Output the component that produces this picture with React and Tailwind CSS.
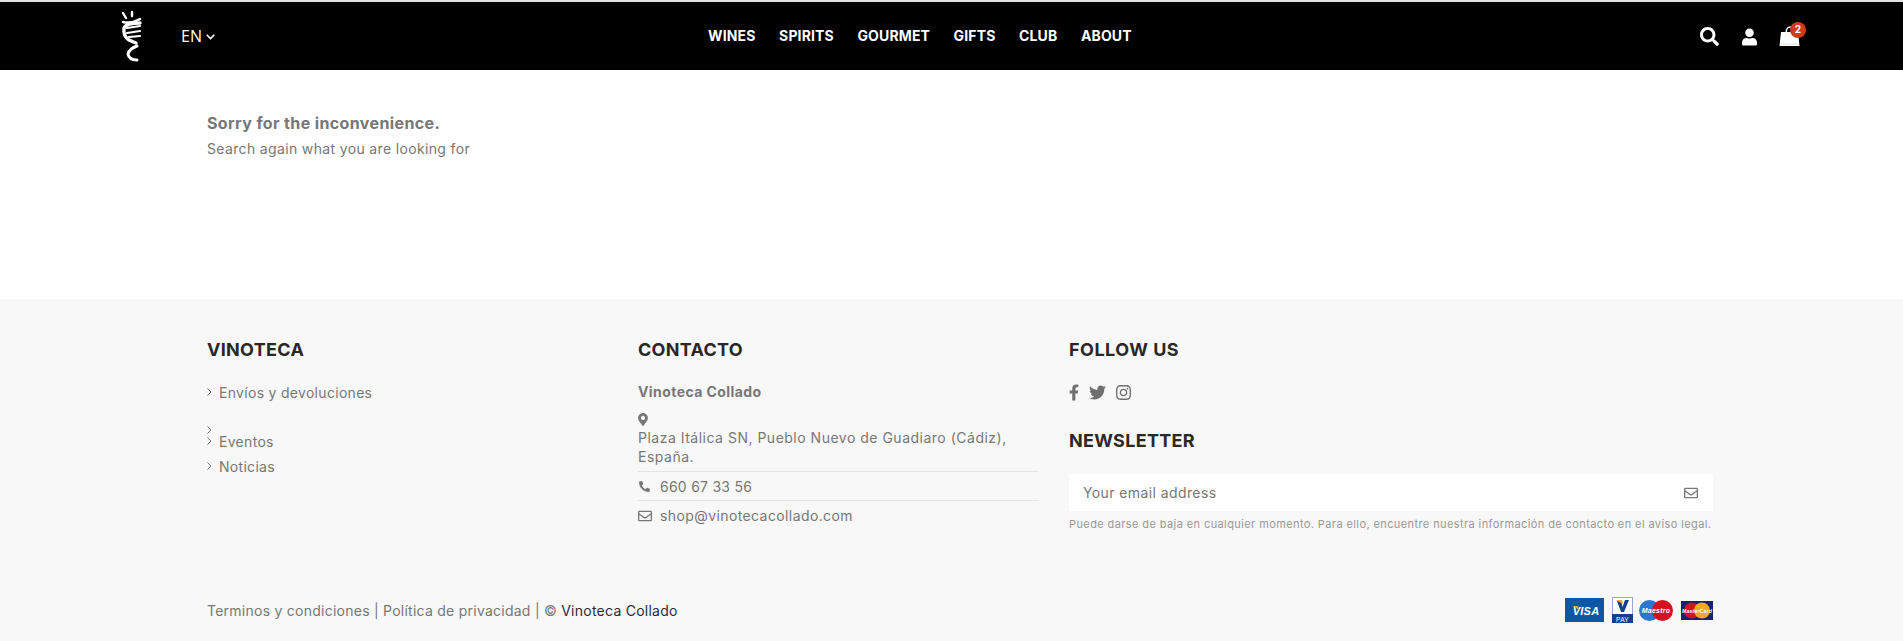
import React from 'react';
import { FaSearch, FaUser, FaFacebookF, FaTwitter, FaInstagram, FaMapMarkerAlt, FaPhoneAlt, FaRegEnvelope } from 'react-icons/fa';

const navItems = ['WINES', 'SPIRITS', 'GOURMET', 'GIFTS', 'CLUB', 'ABOUT'];

function Logo() {
  return (
    <svg width="22" height="54" viewBox="0 0 22 54" fill="none" stroke="white" strokeLinecap="round">
      <path d="M3 4 L6 9 M12 3 L12 7" strokeWidth="2.4" />
      <path d="M3 13 Q11 15 20 10" strokeWidth="2.5" />
      <path d="M20 14 Q6 14 4 19 Q3 27 9 31 L16 34" strokeWidth="3.4" />
      <path d="M7 19 L20 17 M7 24 L20 22 M9 28 L20 27" strokeWidth="2.2" />
      <path d="M17 37 Q9 40 8 45 Q9 51 17 51" strokeWidth="3" />
    </svg>
  );
}

function BagIcon() {
  return (
    <svg width="21" height="21" viewBox="0 0 21 21" fill="none">
      <path d="M7 7 Q7.5 1 11 1 Q14.5 1 15 7" stroke="white" strokeWidth="1.4" />
      <path d="M2 6 L19 6 L20.5 20 L0.5 20 Z" fill="white" />
      <path d="M1 18.2 L20 18.2" stroke="#bbb" strokeWidth="0.5" />
    </svg>
  );
}

function Chevron() {
  return (
    <svg className="shrink-0" width="5" height="8" viewBox="0 0 5 8" fill="none" stroke="#777" strokeWidth="1">
      <path d="M0.5 0.5 L4 4 L0.5 7.5" />
    </svg>
  );
}

function PaymentCards() {
  return (
    <div className="flex items-center">
      <svg width="39" height="24" viewBox="0 0 39 24">
        <rect width="39" height="24" fill="#0a57a5" />
        <text x="21" y="17" textAnchor="middle" fontSize="11" fontWeight="700" fontStyle="italic" fill="white" fontFamily="Liberation Sans">VISA</text>
        <path d="M8 8 L13 8 L14 12 Z" fill="#f5a623" />
      </svg>
      <svg className="ml-[8px]" width="21" height="26" viewBox="0 0 21 26">
        <rect width="21" height="26" fill="#fff" />
        <rect x="0.5" y="0.5" width="20" height="25" fill="none" stroke="#9aa5d0" />
        <rect y="17" width="21" height="9" fill="#12408c" />
        <path d="M5 4 L9 15 L12 15 L17 3 L13 3 L10.5 10 L9 4 Z" fill="#12408c" />
        <path d="M4 3 L10 3 L11 7 Z" fill="#f5a623" />
        <text x="10.5" y="24.5" textAnchor="middle" fontSize="6.5" fill="white" fontFamily="Liberation Sans">PAY</text>
      </svg>
      <svg className="ml-[6px]" width="34" height="21" viewBox="0 0 34 21">
        <circle cx="10.5" cy="10.5" r="10.5" fill="#2a77d0" />
        <circle cx="23.5" cy="10.5" r="10.5" fill="#d5121f" />
        <text x="17" y="13" textAnchor="middle" fontSize="7" fontWeight="700" fontStyle="italic" fill="white" fontFamily="Liberation Sans">Maestro</text>
      </svg>
      <svg className="ml-[8px]" width="32" height="19" viewBox="0 0 32 19">
        <rect width="32" height="19" fill="#17226b" />
        <circle cx="11" cy="9.5" r="8" fill="#d5121f" />
        <circle cx="21" cy="9.5" r="8" fill="#f7a823" />
        <text x="16" y="11.5" textAnchor="middle" fontSize="5" fontWeight="700" fontStyle="italic" fill="white" fontFamily="Liberation Sans">MasterCard</text>
      </svg>
    </div>
  );
}

function FooterLink({ label, className }) {
  return (
    <div className={`flex items-center h-[12px] text-[14px] tracking-[0.3px] text-[#777] ${className || ''}`}>
      <Chevron />
      {label && <span className="ml-[7px]">{label}</span>}
    </div>
  );
}

function Heading({ children, className }) {
  return <h3 className={`text-[18px] leading-[24px] font-bold tracking-[0.3px] text-[#2b2727] ${className || ''}`}>{children}</h3>;
}

export default function App() {
  return (
    <div className="min-h-[641px] bg-white font-['Inter','Liberation_Sans',sans-serif] text-[#777]">
      <div className="h-[2px] bg-[#e4e4e4]" />
      <header className="h-[68px] bg-black flex items-center text-white">
        <div className="flex items-center pl-[120px] w-[700px] shrink-0">
          <Logo />
          <div className="ml-[39px] flex items-center text-[16px] font-['Open_Sans',sans-serif]">
            EN
            <svg className="ml-[4px] mt-[2px]" width="9" height="6" viewBox="0 0 9 6" fill="none" stroke="white" strokeWidth="1.5">
              <path d="M0.7 0.8 L4.5 4.6 L8.3 0.8" />
            </svg>
          </div>
        </div>
        <nav className="flex gap-[23.5px] text-[14px] font-bold tracking-[0.15px] ml-[8px] mb-[1px]">
          {navItems.map((item) => (
            <span key={item}>{item}</span>
          ))}
        </nav>
        <div className="ml-auto mr-[103px] flex items-center mt-[1px]">
          <FaSearch className="w-[19px] h-[19px]" />
          <FaUser className="ml-[23px] w-[15px] h-[18px]" />
          <div className="relative ml-[22px] -mt-[1px]">
            <BagIcon />
            <span className="absolute -top-[4px] -right-[6px] w-[16px] h-[16px] rounded-full bg-[#d4391b] text-[10px] font-bold flex items-center justify-center">2</span>
          </div>
        </div>
      </header>

      <main className="h-[229px] pl-[207px] pt-[43px]">
        <p className="text-[16px] font-bold leading-[20px] tracking-[0.38px]">Sorry for the inconvenience.</p>
        <p className="text-[14px] mt-[6px] leading-[20px] tracking-[0.35px]">Search again what you are looking for</p>
      </main>

      <footer className="h-[342px] bg-[#f8f8f8] pl-[207px] pr-[190px] pt-[39px]">
        <div className="flex h-[257px]">
          <div className="w-[431px] shrink-0">
            <Heading>VINOTECA</Heading>
            <FooterLink label="Envíos y devoluciones" className="mt-[24px]" />
            <FooterLink className="mt-[26px]" />
            <FooterLink label="Eventos" className="-mt-[1px]" />
            <FooterLink label="Noticias" className="mt-[13px]" />
          </div>

          <div className="w-[431px] shrink-0 pr-[30px]">
            <Heading>CONTACTO</Heading>
            <p className="mt-[21px] text-[14px] leading-[18px] font-bold tracking-[0.42px]">Vinoteca Collado</p>
            <FaMapMarkerAlt className="mt-[12px] w-[10px] h-[13px]" />
            <p className="mt-[2px] text-[14px] leading-[19px] tracking-[0.5px] pb-[5px] border-b border-[#e4e4e4]">Plaza Itálica SN, Pueblo Nuevo de Guadiaro (Cádiz), España.</p>
            <div className="flex items-center h-[29px] border-b border-[#e4e4e4] text-[14px] tracking-[0.25px]">
              <FaPhoneAlt className="w-[11px] h-[11px] ml-[1px] mr-[10px]" />
              <span>660 67 33 56</span>
            </div>
            <div className="flex items-center h-[29px] text-[14px] tracking-[0.4px]">
              <FaRegEnvelope className="w-[14px] h-[14px] mr-[8px]" />
              <span>shop@vinotecacollado.com</span>
            </div>
          </div>

          <div className="w-[644px] shrink-0">
            <Heading className="tracking-[0.5px]">FOLLOW US</Heading>
            <div className="mt-[20px] flex items-center h-[20px] text-[#6f6f6f]">
              <FaFacebookF className="w-[10px] h-[17px]" />
              <FaTwitter className="ml-[10px] w-[17px] h-[17px]" />
              <FaInstagram className="ml-[9px] w-[17px] h-[17px]" />
            </div>
            <Heading className="mt-[27px]">NEWSLETTER</Heading>
            <div className="mt-[21px] h-[37px] bg-white flex items-center justify-between pl-[14px] pr-[15px] text-[14px] tracking-[0.4px]">
              <span>Your email address</span>
              <FaRegEnvelope className="w-[14px] h-[14px]" />
            </div>
            <p className="mt-[6px] text-[11px] leading-[14px] tracking-[0.4px] text-[#999]">Puede darse de baja en cualquier momento. Para ello, encuentre nuestra información de contacto en el aviso legal.</p>
          </div>
        </div>

        <div className="flex items-center justify-between h-[30px] text-[14px] tracking-[0.25px]">
          <p>Terminos y condiciones | Política de privacidad | © <span className="text-[#2b2b3a]">Vinoteca Collado</span></p>
          <PaymentCards />
        </div>
      </footer>
    </div>
  );
}
